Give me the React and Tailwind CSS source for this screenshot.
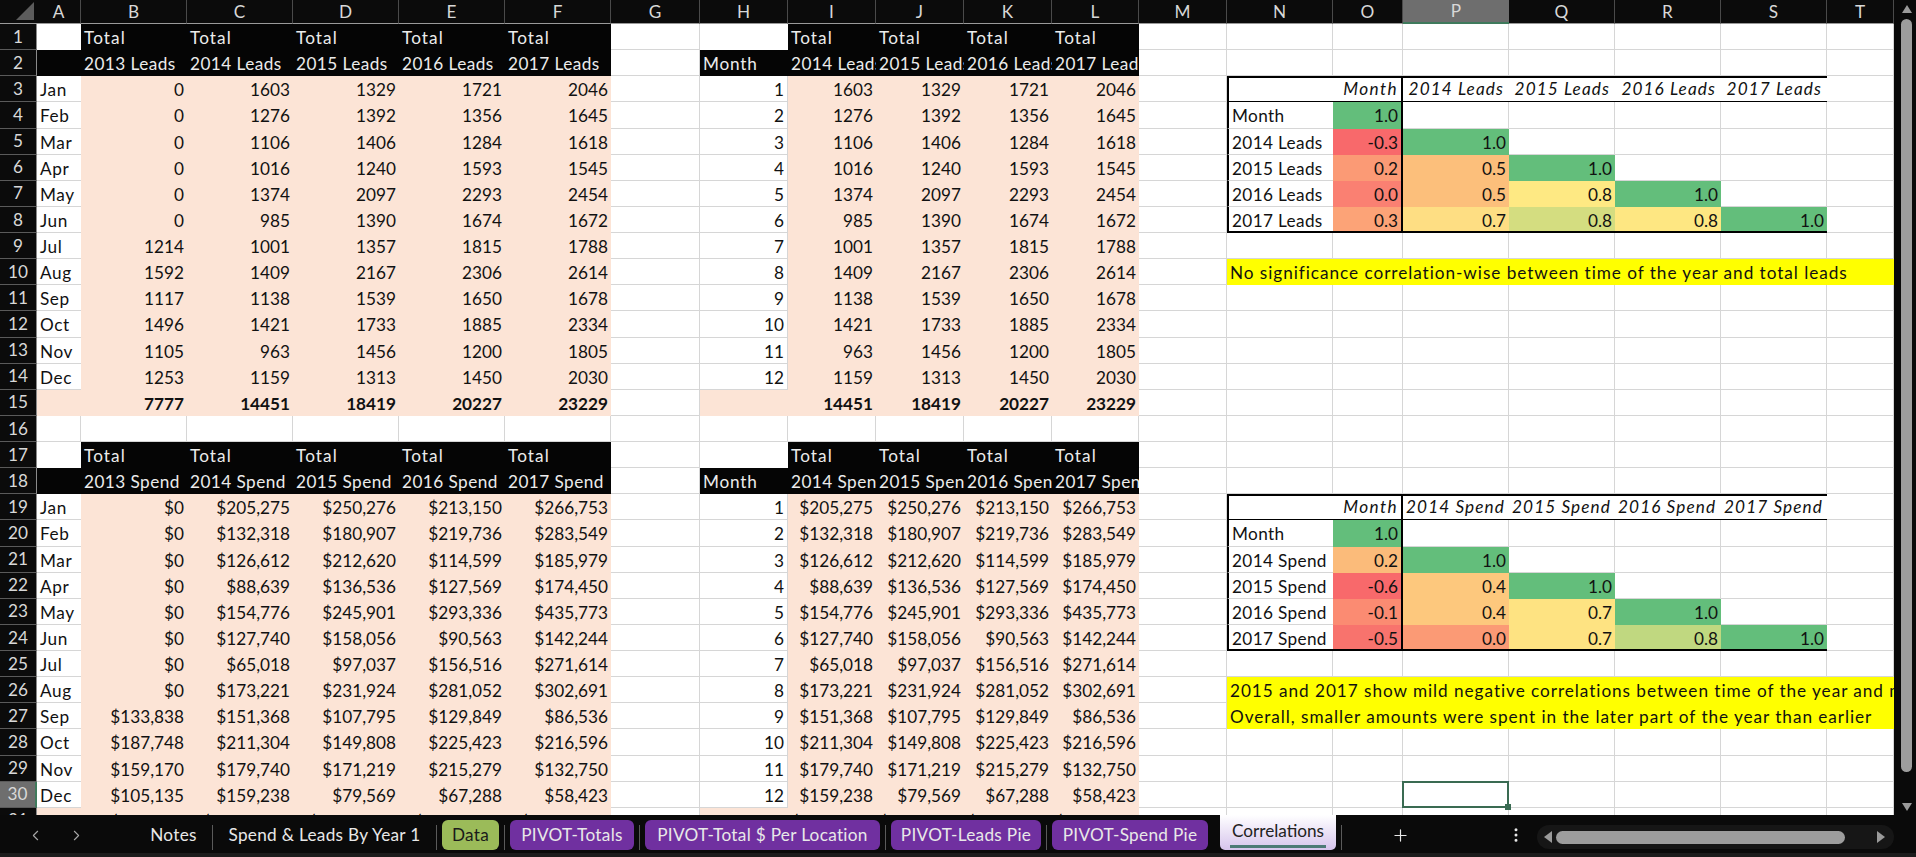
import React from 'react';
import { ChevronLeft, ChevronRight, Plus, EllipsisVertical } from 'lucide-react';

const columnLetters = ['A', 'B', 'C', 'D', 'E', 'F', 'G', 'H', 'I', 'J', 'K', 'L', 'M', 'N', 'O', 'P', 'Q', 'R', 'S', 'T'];
const months = ['Jan', 'Feb', 'Mar', 'Apr', 'May', 'Jun', 'Jul', 'Aug', 'Sep', 'Oct', 'Nov', 'Dec'];

const leads = [
  [0, 1603, 1329, 1721, 2046],
  [0, 1276, 1392, 1356, 1645],
  [0, 1106, 1406, 1284, 1618],
  [0, 1016, 1240, 1593, 1545],
  [0, 1374, 2097, 2293, 2454],
  [0, 985, 1390, 1674, 1672],
  [1214, 1001, 1357, 1815, 1788],
  [1592, 1409, 2167, 2306, 2614],
  [1117, 1138, 1539, 1650, 1678],
  [1496, 1421, 1733, 1885, 2334],
  [1105, 963, 1456, 1200, 1805],
  [1253, 1159, 1313, 1450, 2030],
];

const spend = [
  [0, 205275, 250276, 213150, 266753],
  [0, 132318, 180907, 219736, 283549],
  [0, 126612, 212620, 114599, 185979],
  [0, 88639, 136536, 127569, 174450],
  [0, 154776, 245901, 293336, 435773],
  [0, 127740, 158056, 90563, 142244],
  [0, 65018, 97037, 156516, 271614],
  [0, 173221, 231924, 281052, 302691],
  [133838, 151368, 107795, 129849, 86536],
  [187748, 211304, 149808, 225423, 216596],
  [159170, 179740, 171219, 215279, 132750],
  [105135, 159238, 79569, 67288, 58423],
];

const leadsTotals = [7777, 14451, 18419, 20227, 23229];
const spendTotals = [0, 1, 2, 3, 4].map((i) => spend.reduce((sum, row) => sum + row[i], 0));
const money = (n) => '$' + n.toLocaleString('en-US');

const GREEN = 'bg-[#63be7b]';

const leadsCorr = {
  heads: ['2014 Leads', '2015 Leads', '2016 Leads', '2017 Leads'],
  rows: [
    ['Month', [['1.0', GREEN]]],
    ['2014 Leads', [['-0.3', 'bg-[#f8696b]'], ['1.0', GREEN]]],
    ['2015 Leads', [['0.2', 'bg-[#fb9a75]'], ['0.5', 'bg-[#fcbf7b]'], ['1.0', GREEN]]],
    ['2016 Leads', [['0.0', 'bg-[#fa8072]'], ['0.5', 'bg-[#fcbf7b]'], ['0.8', 'bg-[#fee983]'], ['1.0', GREEN]]],
    ['2017 Leads', [['0.3', 'bg-[#fca377]'], ['0.7', 'bg-[#fede83]'], ['0.8', 'bg-[#d4dd80]'], ['0.8', 'bg-[#fee782]'], ['1.0', GREEN]]],
  ],
};

const spendCorr = {
  heads: ['2014 Spend', '2015 Spend', '2016 Spend', '2017 Spend'],
  rows: [
    ['Month', [['1.0', GREEN]]],
    ['2014 Spend', [['0.2', 'bg-[#fbbb7a]'], ['1.0', GREEN]]],
    ['2015 Spend', [['-0.6', 'bg-[#f8696b]'], ['0.4', 'bg-[#fdc87d]'], ['1.0', GREEN]]],
    ['2016 Spend', [['-0.1', 'bg-[#fb8b72]'], ['0.4', 'bg-[#fdc87d]'], ['0.7', 'bg-[#fee382]'], ['1.0', GREEN]]],
    ['2017 Spend', [['-0.5', 'bg-[#f8736d]'], ['0.0', 'bg-[#fb9a75]'], ['0.7', 'bg-[#fee382]'], ['0.8', 'bg-[#c0d880]'], ['1.0', GREEN]]],
  ],
};

const LINE = 'border-r border-b border-[#d6d6d6]';
const PEACH = 'bg-[#fce4d6]';
const BLACK = 'bg-[#050505] text-[#ececec]';

function Cell({ className = '', lh = 'leading-[27px]', children }) {
  return (
    <div className={`overflow-hidden whitespace-nowrap px-[3px] text-[#111] ${lh} ${className}`}>
      {children}
    </div>
  );
}

const Empty = () => <Cell className={LINE} />;

function RowHead({ n, selected }) {
  return (
    <div className={`flex items-center justify-center border-b border-[#5a5a5a] text-[#d8d8d8] ${selected ? 'bg-[#6e6e6e] border-r-2 border-r-[#3f7a5c]' : 'bg-[#0b0b0b] border-r border-r-[#8a8a8a]'}`}>
      {n}
    </div>
  );
}

// row that holds a title in the black header block
function TitleRow({ n, cols, first, month }) {
  const spacing = first ? 'tracking-[1.1px]' : 'tracking-[0.45px]';
  return (
    <>
      <RowHead n={n} />
      {first ? <Cell className="bg-white" /> : <Cell className={BLACK} />}
      {cols.map((c, i) => <Cell key={i} className={`${BLACK} ${spacing}`}>{c}</Cell>)}
      <Empty />
      {first ? <Cell className="bg-white" /> : <Cell className={`${BLACK} tracking-[0.8px]`}>{month}</Cell>}
      {cols.slice(1).map((c, i) => <Cell key={i} className={`${BLACK} ${spacing}`}>{c}</Cell>)}
    </>
  );
}

// left and middle tables for one data row: A..L
function DataCells({ label, num, values, format, bold }) {
  const weight = bold ? 'font-bold' : '';
  return (
    <>
      <Cell className={label ? 'bg-white border-b border-[#d6d6d6] tracking-[0.6px]' : PEACH}>{label}</Cell>
      {values.map((v, i) => (
        <Cell key={i} className={`${PEACH} text-right ${weight}`}>{format(v)}</Cell>
      ))}
      <Empty />
      <Cell className={num ? `${LINE} text-right` : PEACH}>{num}</Cell>
      {values.slice(1).map((v, i) => (
        <Cell key={i} className={`${PEACH} text-right ${weight}`}>{format(v)}</Cell>
      ))}
    </>
  );
}

const Blanks = ({ count }) => Array.from({ length: count }, (_, i) => <Empty key={i} />);

function CorrHead({ heads }) {
  return (
    <>
      <Empty />
      <Cell className="border-t-2 border-l-2 border-b border-black" />
      <Cell lh="leading-[22px]" className="border-t-2 border-r-2 border-b border-black text-right italic tracking-[1.4px]">Month</Cell>
      {heads.map((h) => (
        <Cell key={h} lh="leading-[22px]" className="border-t-2 border-b border-black pr-[5px] text-right italic tracking-[1.1px]">{h}</Cell>
      ))}
      <Empty />
    </>
  );
}

function CorrRow({ row, last }) {
  const [name, vals] = row;
  const [first, ...rest] = vals;
  const bottom = last ? 'border-b-2 border-black' : '';
  const blanks = 4 - rest.length;
  return (
    <>
      <Empty />
      <Cell className={`border-l-2 border-black tracking-[0.35px] ${last ? 'border-b-2' : 'border-b border-b-[#d6d6d6]'}`}>{name}</Cell>
      <Cell className={`${first[1]} border-r-2 border-black text-right ${bottom}`}>{first[0]}</Cell>
      {rest.map(([v, bg], i) => (
        <Cell key={i} className={`${bg} text-right ${bottom}`}>{v}</Cell>
      ))}
      <Blanks count={blanks} />
      <Empty />
    </>
  );
}

function Note({ children }) {
  return (
    <>
      <Empty />
      <Cell className="col-span-7 bg-[#ffff00] tracking-[0.95px]">{children}</Cell>
    </>
  );
}

function Sheet() {
  const rows = [];
  const leadHeads = ['2013 Leads', '2014 Leads', '2015 Leads', '2016 Leads', '2017 Leads'];
  const spendHeads = ['2013 Spend', '2014 Spend', '2015 Spend', '2016 Spend', '2017 Spend'];

  const right = (n) => {
    if (n === 3) return <CorrHead heads={leadsCorr.heads} />;
    if (n >= 4 && n <= 8) return <CorrRow row={leadsCorr.rows[n - 4]} last={n === 8} />;
    if (n === 10) return <Note>No significance correlation-wise between time of the year and total leads</Note>;
    if (n === 19) return <CorrHead heads={spendCorr.heads} />;
    if (n >= 20 && n <= 24) return <CorrRow row={spendCorr.rows[n - 20]} last={n === 24} />;
    if (n === 26) return <Note>2015 and 2017 show mild negative correlations between time of the year and money spent</Note>;
    if (n === 27) return <Note>Overall, smaller amounts were spent in the later part of the year than earlier</Note>;
    if (n === 30) {
      return (
        <>
          <Blanks count={3} />
          <div className="relative border-r border-b border-[#d6d6d6]">
            <div className="absolute -inset-px border-2 border-[#3a6b52]" />
            <div className="absolute -right-[3px] -bottom-[3px] h-[6px] w-[6px] bg-[#3a6b52]" />
          </div>
          <Blanks count={4} />
        </>
      );
    }
    return <Blanks count={8} />;
  };

  for (let n = 1; n <= 31; n++) {
    let left;
    if (n === 1) left = <TitleRow n={n} first cols={['Total', 'Total', 'Total', 'Total', 'Total']} />;
    else if (n === 2) left = <TitleRow n={n} month="Month" cols={leadHeads} />;
    else if (n >= 3 && n <= 14) {
      left = (
        <>
          <RowHead n={n} />
          <DataCells label={months[n - 3]} num={n - 2} values={leads[n - 3]} format={(v) => v} />
        </>
      );
    } else if (n === 15) {
      left = (
        <>
          <RowHead n={n} />
          <DataCells values={leadsTotals} format={(v) => v} bold />
        </>
      );
    } else if (n === 16) {
      left = (
        <>
          <RowHead n={n} />
          <Blanks count={12} />
        </>
      );
    } else if (n === 17) left = <TitleRow n={n} first cols={['Total', 'Total', 'Total', 'Total', 'Total']} />;
    else if (n === 18) left = <TitleRow n={n} month="Month" cols={spendHeads} />;
    else if (n >= 19 && n <= 30) {
      left = (
        <>
          <RowHead n={n} selected={n === 30} />
          <DataCells label={months[n - 19]} num={n - 18} values={spend[n - 19]} format={money} />
        </>
      );
    } else {
      left = (
        <>
          <RowHead n={n} />
          <DataCells values={spendTotals} format={money} bold />
        </>
      );
    }
    rows.push(
      <React.Fragment key={n}>
        {left}
        {right(n)}
      </React.Fragment>
    );
  }

  return (
    <div className="grid h-[815px] w-[1894px] grid-cols-[37px_44px_repeat(5,106px)_89px_88px_88px_88px_88px_87px_88px_106px_70px_106px_106px_106px_106px_67px] grid-rows-[24px_repeat(31,26.13px)] overflow-hidden bg-white">
      <div className="flex items-end justify-end border-b border-[#9a9a9a] bg-[#0b0b0b] pr-[3px] pb-[3px]">
        <svg width="18" height="18" viewBox="0 0 18 18"><polygon points="18,0 18,18 0,18" fill="#5c5c5c" /></svg>
      </div>
      {columnLetters.map((c) => (
        <div
          key={c}
          className={`flex items-center justify-center ${c === 'P' ? 'border-b-2 border-[#3f7a5c] bg-[#6e6e6e]' : 'border-r border-b border-r-[#4a4a4a] border-b-[#9a9a9a] bg-[#0b0b0b]'} text-[#d8d8d8]`}
        >
          {c}
        </div>
      ))}
      {rows}
    </div>
  );
}

function VScroll() {
  return (
    <div className="flex h-[815px] w-[22px] flex-col items-center bg-[#0a0a0a] pt-[5px] pl-[3px]">
      <svg width="10" height="8" viewBox="0 0 10 8"><polygon points="5,0 10,8 0,8" fill="#9a9a9a" /></svg>
      <div className="mt-[6px] h-[753px] w-[11px] rounded-full bg-[#9d9d9d]" />
      <div className="flex-1" />
      <svg className="mb-[4px]" width="10" height="8" viewBox="0 0 10 8"><polygon points="0,0 10,0 5,8" fill="#9a9a9a" /></svg>
    </div>
  );
}

const Sep = () => <div className="mx-[5px] mt-[5px] h-[25px] w-px bg-[#5a5a5a]" />;

function Tab({ className = '', children }) {
  return (
    <div className={`flex h-[30px] items-center justify-center rounded-[6px] tracking-[0.3px] ${className}`}>
      {children}
    </div>
  );
}

function TabBar() {
  return (
    <div className="flex h-[38px] items-start bg-[#0a0a0a] pt-[5px] text-[#e8e8e8]">
      <div className="flex h-[30px] w-[135px] items-center gap-[24px] pl-[27px] text-[#a8a8a8]">
        <ChevronLeft size={17} strokeWidth={1.5} />
        <ChevronRight size={17} strokeWidth={1.5} />
      </div>
      <Tab className="w-[77px]">Notes</Tab>
      <div className="mt-[5px] h-[25px] w-px bg-[#5a5a5a]" />
      <Tab className="w-[223px]">Spend &amp; Leads By Year 1</Tab>
      <div className="mt-[5px] h-[25px] w-px bg-[#5a5a5a]" />
      <Tab className="ml-[5px] w-[57px] bg-[#9bbb59] text-[#1a1a1a]">Data</Tab>
      <Sep />
      <Tab className="w-[124px] bg-[#7030a0]">PIVOT-Totals</Tab>
      <Sep />
      <Tab className="w-[235px] bg-[#7030a0]">PIVOT-Total $ Per Location</Tab>
      <Sep />
      <Tab className="w-[150px] bg-[#7030a0]">PIVOT-Leads Pie</Tab>
      <Sep />
      <Tab className="w-[156px] bg-[#7030a0]">PIVOT-Spend Pie</Tab>
      <div className="relative -mt-[5px] ml-[12px] flex h-[35px] w-[116px] flex-col items-center rounded-b-[5px] bg-gradient-to-b from-white to-[#d6c4ec] text-[#222]">
        <span className="mt-[3px] leading-[26px]">Correlations</span>
        <div className="mt-[1px] h-[3px] w-[96px] bg-[#4d7a76]" />
      </div>
      <div className="ml-[5px] mt-[5px] h-[25px] w-px bg-[#5a5a5a]" />
      <div className="flex h-[30px] w-[117px] items-center justify-center">
        <Plus size={19} strokeWidth={1.5} />
      </div>
      <div className="flex h-[30px] w-[78px] items-center justify-end pr-[12px]">
        <EllipsisVertical size={18} strokeWidth={2} />
      </div>
      <div className="mt-[5px] flex h-[24px] w-[357px] items-center rounded-full bg-[#161616] px-[7px]">
        <svg width="8" height="12" viewBox="0 0 8 12"><polygon points="8,0 8,12 0,6" fill="#9a9a9a" /></svg>
        <div className="ml-[4px] h-[13px] w-[289px] rounded-full bg-[#9d9d9d]" />
        <div className="flex-1" />
        <svg className="mr-[2px]" width="8" height="12" viewBox="0 0 8 12"><polygon points="0,0 8,6 0,12" fill="#9a9a9a" /></svg>
      </div>
    </div>
  );
}

export default function App() {
  return (
    <div className="h-[857px] w-[1916px] overflow-hidden bg-[#0a0a0a] font-['Lato',sans-serif] text-[17.2px]">
      <div className="flex">
        <Sheet />
        <VScroll />
      </div>
      <TabBar />
      <div className="h-[4px] bg-[#1c1c1c]" />
    </div>
  );
}
